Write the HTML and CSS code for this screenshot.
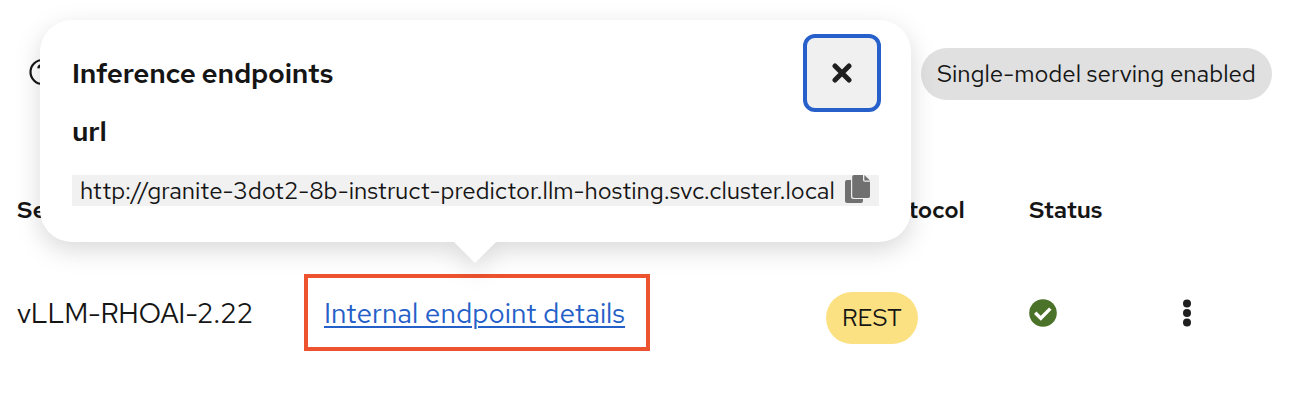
FILE: index.html
```html
<!DOCTYPE html>
<html lang="en">
<head>
<meta charset="utf-8">
<title>Model deployments</title>
<link rel="stylesheet" href="styles.css">
</head>
<body>
<main class="page">
  <div class="toolbar">
    <svg class="help-icon" viewBox="0 0 28 28" fill="none" stroke="#151515" stroke-width="2.2">
      <circle cx="14.500" cy="14" r="12"/>
      <path d="M10.300 10.300c.5-4.2 8-4.2 8 0 0 2.8-3.8 2.8-3.8 5.6M14.500 18.3v2.4"/>
    </svg>
    <span class="label label-grey">Single-model serving enabled</span>
  </div>
  <div class="row head">
    <span>Se</span>
    <span></span>
    <span class="protocol-head">Protocol</span>
    <span>Status</span>
    <span></span>
  </div>
  <div class="row body">
    <span class="runtime">vLLM-RHOAI-2.22</span>
    <div class="highlight"><a href="#">Internal endpoint details</a></div>
    <span class="label label-yellow">REST</span>
    <svg class="check-icon" viewBox="0 0 28 28">
      <circle cx="14" cy="14" r="13.8" fill="#4b7229"/>
      <path d="M6.2 13.8l5.600 5.500 9.500-9.700" fill="none" stroke="#fff" stroke-width="3.400"/>
    </svg>
    <svg class="kebab-icon" viewBox="0 0 8 28" fill="#1f1f1f">
      <circle cx="4" cy="4.4" r="4"/><circle cx="4" cy="14" r="4"/><circle cx="4" cy="23.6" r="4"/>
    </svg>
  </div>
  <section class="popover">
    <header class="popover-head">
      <h2>Inference endpoints</h2>
      <button class="close" aria-label="Close">
        <svg class="close-icon" viewBox="0 0 20 20" fill="none" stroke="#1f1f1f" stroke-width="5" stroke-linecap="round">
          <path d="M3 3l14 14M17 3L3 17"/>
        </svg>
      </button>
    </header>
    <h3>url</h3>
    <div class="copy">
      <span class="url">http://granite-3dot2-8b-instruct-predictor.llm-hosting.svc.cluster.local</span>
      <svg class="copy-icon" viewBox="0 0 26 28" fill="#707070">
        <path d="M2 5h4v16.500q0 2.500 2.500 2.500H18v2q0 2-2 2H2q-2 0-2-2V7q0-2 2-2z"/>
        <path d="M9 0h9v5q0 1.700 1.700 1.700H25v14.500q0 1.800-1.800 1.800H9q-1.800 0-1.800-1.800V1.800Q7.200 0 9 0z"/>
        <path d="M19.300 0L25 5.500h-5.700z"/>
      </svg>
    </div>
    <span class="arrow"></span>
  </section>
</main>
</body>
</html>
```
FILE: styles.css
```css
* { box-sizing: border-box; }
body { margin: 0; background: #fff; color: #151515; font-family: "Red Hat Text", Lato, "Open Sans", sans-serif; font-size: 28px; }
.page { position: relative; width: 1292px; height: 404px; overflow: hidden; white-space: nowrap; }
.page svg { display: block; flex: none; }
h2, h3 { margin: 0; font-weight: 600; font-size: 28px; line-height: 36px; letter-spacing: -.22px; }
h3 { padding-top: 1px; }

.toolbar { display: flex; justify-content: space-between; align-items: center; height: 52px; margin-top: 48px; padding: 0 20px 0 28px; }
.help-icon { width: 28px; height: 28px; margin-bottom: 4px; }
.label { display: flex; align-items: center; height: 52px; padding: 0 16px; border-radius: 26px; font-size: 24px; }
.label-grey { width: 351px; padding-bottom: 2px; background: #e0e0e0; }
.label-yellow { width: 92px; margin-top: 9px; background: #fbe181; }

.row { display: grid; grid-template-columns: 287px 522px 203px 154px 1fr; align-items: center; padding-left: 17px; }
.head { height: 36px; margin-top: 91px; font-size: 24px; font-weight: 600; letter-spacing: -.2px; }
.protocol-head { padding-left: 43px; }
.body { height: 78px; margin-top: 47px; }
.runtime { letter-spacing: -.27px; }
.highlight { display: flex; align-items: center; width: 345.5px; height: 77px; margin-bottom: 1px; padding: 1px 0 0 16px; border: 4px solid #ee532f; }
.highlight a { color: #2560c8; text-decoration: underline; text-decoration-thickness: 2px; text-underline-offset: 3px; }
.check-icon { width: 28px; height: 28px; }
.kebab-icon { width: 8px; height: 28px; }

.popover { position: absolute; left: 40px; top: 20px; width: 871px; height: 222px; padding: 14px 30px 0 32px; border-radius: 32px; background: #fff; filter: drop-shadow(0 8px 12px rgba(0,0,0,.15)); }
.popover-head { display: flex; align-items: center; justify-content: space-between; height: 78px; }
.close { display: flex; align-items: center; justify-content: center; width: 78px; height: 78px; padding: 0; border: 4px solid #2760cb; border-radius: 12px; background: #f0f0f0; }
.close-icon { width: 20px; height: 20px; }
.copy { display: flex; align-items: flex-start; justify-content: space-between; width: 807px; height: 31px; margin-top: 26px; padding: 0 8px; background: #f1f1f1; font-size: 24px; line-height: 31px; }
.url { letter-spacing: -.015px; }
.copy-icon { width: 26px; height: 28px; }
.arrow { position: absolute; left: 413px; top: 221px; width: 44px; height: 22px; background: #fff; clip-path: polygon(0 0, 100% 0, 50% 100%); }
```
